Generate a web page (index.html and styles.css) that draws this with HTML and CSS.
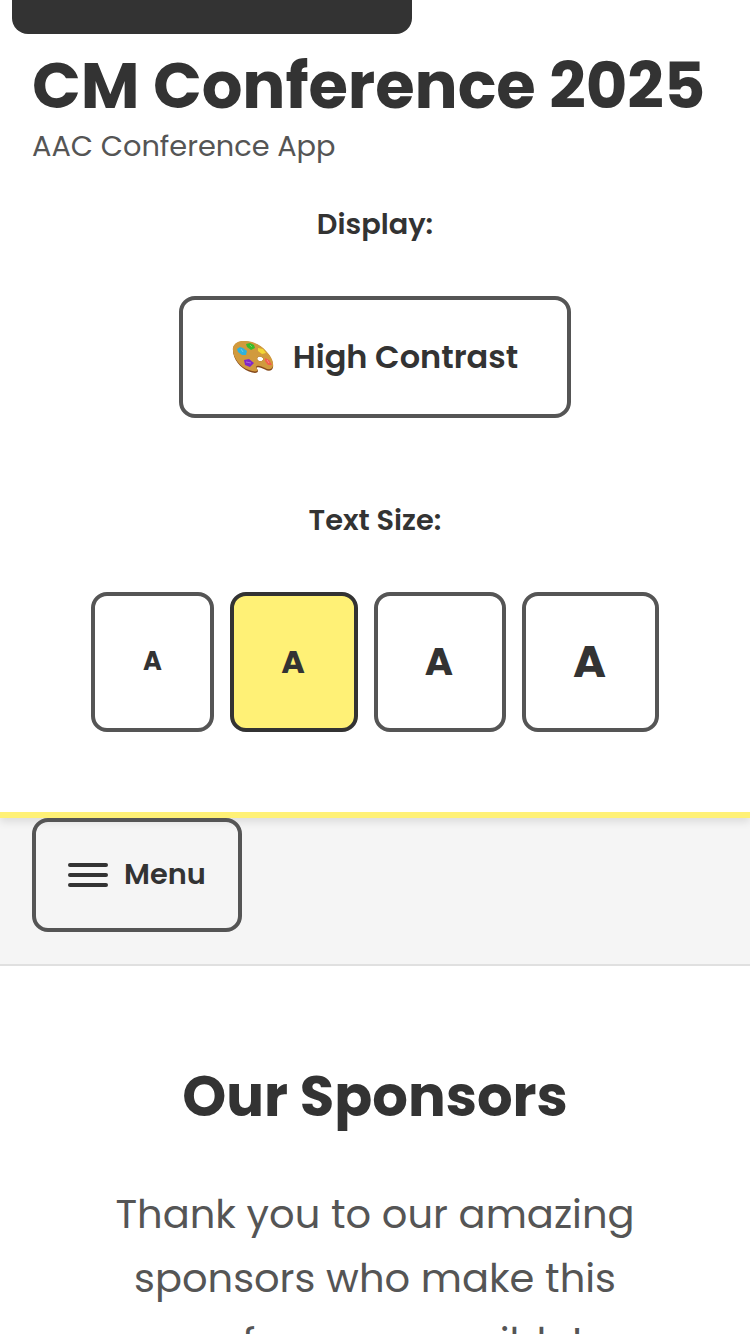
FILE: index.html
```html
<!DOCTYPE html>
<html lang="en">
<head>
<meta charset="utf-8">
<title>CM Conference 2025</title>
<link rel="stylesheet" href="styles.css">
</head>
<body>
<a class="skip-link" href="#main" aria-label="Skip to content"></a>
<header class="header">
  <h1 class="title">CM Conference 2025</h1>
  <p class="tagline">AAC Conference App</p>
  <div class="label label-display">Display:</div>
  <button class="contrast">
    <svg class="palette" viewBox="0 0 42 34" aria-hidden="true">
      <path d="M1 8C3 2 8 1 14 1.500c8 .5 16 5 20 10 4 4 8 11 7 16-1 4-5 4-8 2-3-1-6-3-8-2-2 1 3 3 0 5-2 1-5 0-8-1C8 28 0 18 1 8zM28 16.500c-3 0-4 3-1 4.500 3 1 5-1 4-3-1-1-2-1.500-3-1.500z" fill="#85491c" fill-rule="evenodd"/>
      <path d="M1 7.500C3 1.500 8 .5 14 1c8 .5 16 5 20 10 4 4 8 10 7 15-1 4-5 4-8 2-3-1-6-3-8-2-3 1 2 3 0 5-2 1-5 0-8-1C8 27 0 17 1 7.500zM28 16.500c-3 0-4 3-1 4.500 3 1 5-1 4-3-1-1-2-1.500-3-1.500z" fill="#d19a3d" fill-rule="evenodd"/>
      <path d="M5 9l3-2 3 1 4 3-1 4-4 0-4-3z" fill="#2fb2dc"/>
      <path d="M14 4l4-1 4 2 1 3-4 2-4-3z" fill="#38bc29"/>
      <path d="M26 8l5 1 3 4-4 1-4-3z" fill="#f3d735"/>
      <path d="M12 20l5-1 5 4-4 4-5-2z" fill="#8128c8"/>
      <path d="M33 18l4 2 3 5-4 0-3-4z" fill="#f45b4d"/>
      <path d="M9 9l2 3M18 5l2 2M14 22l5 1M35 20l2 3" fill="none" stroke="#fff" stroke-opacity=".3"/>
    </svg>
    <span class="contrast-text">High Contrast</span>
  </button>
  <div class="label label-size">Text Size:</div>
  <div class="sizes">
    <button class="size small">A</button>
    <button class="size medium active">A</button>
    <button class="size large">A</button>
    <button class="size xlarge">A</button>
  </div>
</header>
<nav class="nav">
  <button class="menu">
    <span class="bars"><i class="bar"></i><i class="bar"></i><i class="bar"></i></span>
    <span class="menu-text">Menu</span>
  </button>
</nav>
<main class="main" id="main">
  <h2 class="heading">Our Sponsors</h2>
  <p class="intro">Thank you to our amazing<br>sponsors who make this<br>conference possible!</p>
</main>
</body>
</html>
```
FILE: styles.css
```css
* { box-sizing: border-box; margin: 0; }
body {
  height: 1334px;
  overflow: hidden;
  background: #fff;
  color: #333;
  font-family: Poppins, Inter, sans-serif;
}
button {
  display: flex;
  align-items: center;
  justify-content: center;
  padding: 0;
  border: 4px solid #555;
  border-radius: 16px;
  background: none;
  color: inherit;
  font-family: inherit;
}
.skip-link {
  position: absolute;
  z-index: 1;
  top: 0;
  left: 12px;
  width: 400px;
  height: 34px;
  background: #333;
  border-radius: 0 0 16px 16px;
}
.header {
  position: relative;
  display: flex;
  flex-direction: column;
  align-items: center;
  height: 818px;
  padding-top: 47px;
  background: #fff;
  border-bottom: 6px solid #fff176;
  box-shadow: 0 4px 8px rgba(0, 0, 0, .1);
}
.title, .tagline { align-self: flex-start; margin-left: 32px; white-space: nowrap; }
.title { font-size: 64px; line-height: 77px; font-weight: 700; letter-spacing: -.05px; }
.tagline { font-size: 28.8px; line-height: 44px; color: #555; }
.label { font-size: 28.8px; line-height: 44px; font-weight: 600; }
.label-display { margin-top: 34px; }
.contrast { width: 392px; height: 122px; margin-top: 50px; gap: 19px; }
.palette { width: 42px; height: 34px; }
.contrast-text { font-size: 32px; line-height: 50px; font-weight: 600; white-space: nowrap; }
.label-size { margin-top: 80px; }
.sizes { display: flex; gap: 16px; margin-top: 50px; }
.size { height: 140px; padding: 0 2px 2px 0; font-weight: 700; }
.small { width: 123px; padding-right: 0; font-size: 25.6px; }
.medium { width: 128px; padding-bottom: 0; font-size: 32px; }
.large { width: 132px; font-size: 38.4px; }
.xlarge { width: 137px; font-size: 44.8px; }
.active { background: #fff176; border-color: #333; }
.nav { height: 148px; padding-left: 32px; background: #f5f5f5; border-bottom: 2px solid #e0e0e0; }
.menu { position: relative; width: 210px; height: 114px; gap: 16px; justify-content: flex-start; padding-left: 32px; }
.bars { display: flex; flex-direction: column; gap: 6px; width: 40px; }
.bar { height: 4px; border-radius: 2px; background: #333; }
.menu-text { padding-bottom: 2px; font-size: 28.8px; line-height: 44px; font-weight: 600; }
.main { text-align: center; padding-top: 91px; }
.heading { font-size: 56px; line-height: 80px; font-weight: 700; white-space: nowrap; }
.intro { margin-top: 45px; font-size: 40px; line-height: 64px; color: #555; white-space: nowrap; }
```
